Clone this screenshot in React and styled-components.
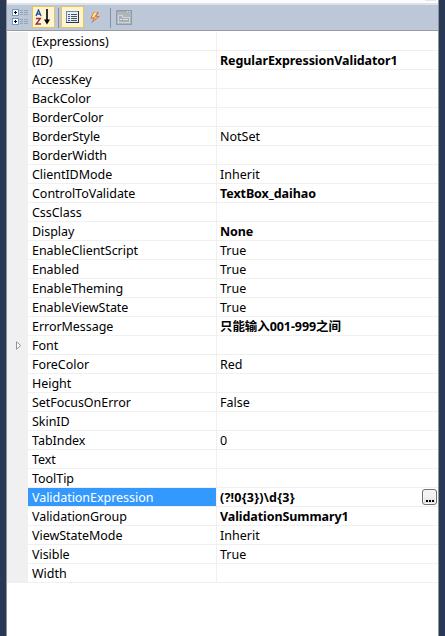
import React from "react";
import styled, { createGlobalStyle } from "styled-components";

const GlobalStyle = createGlobalStyle`
  * { box-sizing: border-box; }
  body { margin: 0; background: #293955; }
`;

const Window = styled.div`
  height: 636px;
  display: flex;
  flex-direction: column;
  padding: 0 6px;
  background: #293955;
  font-family: "Noto Sans", "Noto Sans CJK SC", sans-serif;
  font-size: 12.5px;
  color: #000;
`;

const Panel = styled.div`
  flex: 1;
  display: flex;
  flex-direction: column;
  border: solid #8e9299;
  border-width: 0 1px;
  background: #fff;
`;

const ObjectPicker = styled.div`
  height: 5px;
  flex: none;
  display: flex;
  justify-content: flex-end;
  padding-right: 2px;
  background: #fcfcfc;
  border-bottom: 2px solid #dde2ea;
`;

const DropButton = styled.div`
  width: 11px;
  height: 1px;
  background: #e6e6e6;
`;

const Toolbar = styled.div`
  height: 26px;
  flex: none;
  display: flex;
  align-items: flex-start;
  padding: 1px 0 0 2px;
  background: #bcc7d8;
  border-bottom: 1px solid #999b9f;
`;

const ToolButton = styled.div`
  width: 23px;
  height: 22px;
  display: flex;
  align-items: center;
  padding-left: ${(p) => p.$inset}px;
  border: 1px solid ${(p) => (p.$active ? "#e5c365" : "transparent")};
  background: ${(p) => (p.$active ? "#fdf4d2" : "transparent")};
`;

const Separator = styled.div`
  width: 1px;
  height: 20px;
  margin: 2px 2px 0 3px;
  background: #8591a2;
`;

const Grid = styled.div`
  padding-top: 1px;
`;

const Row = styled.div`
  height: 19px;
  display: grid;
  grid-template-columns: 21px 188px 1fr;
  grid-template-rows: 19px;
  line-height: 18px;
`;

const Gutter = styled.div`
  display: flex;
  align-items: center;
  padding-left: 9px;
  background: #f0f0f0;
`;

const Name = styled.div`
  height: 19px;
  padding: 1px 0 0 4px;
  letter-spacing: -0.04px;
  white-space: nowrap;
  border-bottom: 1px solid #f0f0f0;
  color: ${(p) => (p.$selected ? "#fff" : "#000")};
  background: ${(p) => (p.$selected ? "#3399ff" : "#fff")};
  background-clip: padding-box;
`;

const Value = styled.div`
  height: 19px;
  display: flex;
  justify-content: space-between;
  padding: 0 1px 0 3px;
  border-left: 1px solid #f0f0f0;
  border-bottom: 1px solid #f0f0f0;
  white-space: nowrap;
  font-weight: ${(p) => (p.$bold ? 700 : 400)};
  letter-spacing: ${(p) => (p.$bold ? "-0.08px" : "0")};
`;

const ValueText = styled.span`
  padding-top: 1px;
  letter-spacing: ${(p) => (p.$wide ? "0.2px" : "inherit")};
`;

const MoreButton = styled.button`
  width: 15px;
  height: 16px;
  margin-top: 1px;
  padding: 0;
  display: flex;
  align-items: flex-end;
  justify-content: center;
  border: 1px solid #707070;
  border-radius: 3px;
  background: linear-gradient(#f3f3f3 45%, #dcdcdc);
  box-shadow: inset 0 0 0 1px #f8f8f8;
`;

const CategoryIcon = () => (
  <svg width="16" height="16" shapeRendering="crispEdges">
    {[0, 9].map((y) => (
      <g key={y} transform={`translate(0 ${y})`}>
        <rect x="0.5" y="0.5" width="6" height="6" rx="1" fill="#fff" stroke="#6f9bcb" />
        <path d="M2 3.5h3M3.5 2v3" stroke="#000" />
        <path d="M8 1.5h3M12 1.5h4M8 3.5h3M12 3.5h4M8 5.5h3M12 5.5h4" stroke="#98a3b3" />
      </g>
    ))}
  </svg>
);

const SortIcon = () => (
  <svg width="16" height="16" fill="none">
    <path d="M1 7 3.5 1 6 7M2 5h3" stroke="#2458aa" strokeWidth="1.4" />
    <path d="M1 9.5h4.3L1.3 15H6" stroke="#963044" strokeWidth="1.4" />
    <path d="M12 0v12" stroke="#000" strokeWidth="1.6" />
    <path d="M9 10.5h6l-3 5z" fill="#000" />
  </svg>
);

const PropertiesIcon = () => (
  <svg width="13" height="12" shapeRendering="crispEdges">
    <rect x="0.5" y="0.5" width="12" height="11" fill="#e9f0fa" stroke="#7186a6" />
    <path d="M0 11.5h13M12.5 0v12" stroke="#26354f" />
    <path d="M2 3.5h2M2 5.5h2M2 7.5h2M2 9.5h2" stroke="#2c5ba8" />
    <path d="M5 3.5h6M5 5.5h6M5 7.5h6M5 9.5h6" stroke="#475164" />
  </svg>
);

const EventsIcon = () => (
  <svg width="12" height="13">
    <path d="M4.5 1H10L7.5 5H11L2 12.5 4.8 7.5H1.5z" fill="#c86a4b" />
    <path d="M5 1.2h3.5L5.7 5.7H9L4 10l2-3.4H2.7z" fill="#ffc45a" />
    <path d="M5.5 2h1.8L4.5 6H3.3z" fill="#fff0a8" />
  </svg>
);

const PagesIcon = () => (
  <svg width="16" height="15" fill="none" stroke="#929aa5" shapeRendering="crispEdges">
    <rect x="0.5" y="0.5" width="15" height="14" fill="#b0b5bd" />
    <path d="M1 1.5h14" stroke="#a2a8b0" />
    <path d="M11 1.5h1M13 1.5h1" stroke="#dde1e7" />
    <path d="M2.5 5.5h4v2h7v5h-11z" fill="#a8aeb7" stroke="#d0d5dc" />
    <path d="M4 9.5h2M7 9.5h5" stroke="#dfe3e8" />
  </svg>
);

const Expander = () => (
  <svg width="6" height="9">
    <path d="M0.5 0.8v7.4L4.7 4.5z" fill="#fff" stroke="#929292" />
  </svg>
);

const Dots = () => (
  <svg width="8" height="5" fill="#000" shapeRendering="crispEdges">
    <path d="M0 1h2v2H0zM3 1h2v2H3zM6 1h2v2H6z" />
  </svg>
);

const properties = [
  { name: "(Expressions)" },
  { name: "(ID)", value: "RegularExpressionValidator1", bold: true },
  { name: "AccessKey" },
  { name: "BackColor" },
  { name: "BorderColor" },
  { name: "BorderStyle", value: "NotSet" },
  { name: "BorderWidth" },
  { name: "ClientIDMode", value: "Inherit" },
  { name: "ControlToValidate", value: "TextBox_daihao", bold: true },
  { name: "CssClass" },
  { name: "Display", value: "None", bold: true },
  { name: "EnableClientScript", value: "True" },
  { name: "Enabled", value: "True" },
  { name: "EnableTheming", value: "True" },
  { name: "EnableViewState", value: "True" },
  { name: "ErrorMessage", value: "只能输入001-999之间", bold: true },
  { name: "Font", expandable: true },
  { name: "ForeColor", value: "Red" },
  { name: "Height" },
  { name: "SetFocusOnError", value: "False" },
  { name: "SkinID" },
  { name: "TabIndex", value: "0" },
  { name: "Text" },
  { name: "ToolTip" },
  { name: "ValidationExpression", value: "(?!0{3})\\d{3}", bold: true, selected: true },
  { name: "ValidationGroup", value: "ValidationSummary1", bold: true },
  { name: "ViewStateMode", value: "Inherit" },
  { name: "Visible", value: "True" },
  { name: "Width" },
];

export default function App() {
  return (
    <Window>
      <GlobalStyle />
      <Panel>
        <ObjectPicker>
          <DropButton />
        </ObjectPicker>
        <Toolbar>
          <ToolButton $inset={2}><CategoryIcon /></ToolButton>
          <ToolButton $inset={2} $active><SortIcon /></ToolButton>
          <Separator />
          <ToolButton $inset={4} $active><PropertiesIcon /></ToolButton>
          <ToolButton $inset={4}><EventsIcon /></ToolButton>
          <Separator />
          <ToolButton $inset={2}><PagesIcon /></ToolButton>
        </Toolbar>
        <Grid>
          {properties.map((p) => (
            <Row key={p.name}>
              <Gutter>{p.expandable && <Expander />}</Gutter>
              <Name $selected={p.selected}>{p.name}</Name>
              <Value $bold={p.bold}>
                <ValueText $wide={p.selected}>{p.value}</ValueText>
                {p.selected && <MoreButton><Dots /></MoreButton>}
              </Value>
            </Row>
          ))}
        </Grid>
      </Panel>
    </Window>
  );
}
